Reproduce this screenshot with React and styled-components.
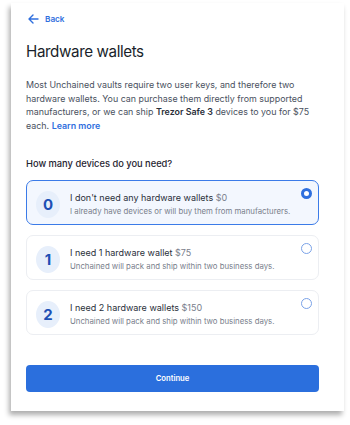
import React, { useState } from 'react'
import styled, { createGlobalStyle } from 'styled-components'

const GlobalStyle = createGlobalStyle`
    html, body {
        margin:0;
        padding:0;
        background:#ffffff;
        font-family:Inter, "Noto Sans", sans-serif;
    }
`;

const Page = styled.div`
    width:350px;
    height:425px;
    box-sizing:border-box;
    padding:3px 6px 0 11px;
    overflow:hidden;
`;

const Card = styled.section`
    background:#ffffff;
    box-shadow:-2px 4px 5px rgba(0,0,0,0.32);
    height:408px;
    box-sizing:border-box;
    padding:10px 25px 0 15px;
    display:flex;
    flex-direction:column;
`;

const BackLink = styled.a`
    display:flex;
    align-items:center;
    gap:6px;
    color:#2f6fde;
    font-size:8.2px;
    font-weight:600;
    text-decoration:none;
    height:12px;
    margin-left:2px;
`;

const Title = styled.h1`
    margin:16px 0 0;
    font-size:15.2px;
    font-weight:400;
    color:#1a1f2b;
    letter-spacing:-0.4px;
    line-height:22px;
`;

const Intro = styled.p`
    margin:15px 0 0;
    font-size:8.9px;
    line-height:13.6px;
    color:#4a5160;
    & strong{
        color:#2a2f3a;
        font-weight:600;
    }
    & a{
        color:#2f6fde;
        font-weight:600;
        text-decoration:none;
    }
`;

const Question = styled.h2`
    margin:25px 0 0;
    font-size:9.3px;
    font-weight:500;
    color:#1f2430;
    line-height:14px;
`;

const Options = styled.div`
    margin-top:9px;
    display:flex;
    flex-direction:column;
    gap:10px;
`;

const Option = styled.label`
    position:relative;
    display:flex;
    align-items:center;
    gap:10px;
    height:45px;
    box-sizing:border-box;
    padding:3px 8px 0 9px;
    border-radius:7px;
    cursor:pointer;
    border:${({ $active }) => $active ? '1.5px solid #3b7be8' : '1px solid #eceef2'};
    background:${({ $active }) => $active ? '#f3f7fe' : '#ffffff'};
`;

const Count = styled.span`
    flex:none;
    width:24px;
    height:27px;
    border-radius:50%;
    background:#e7effb;
    color:#1d4fb5;
    font-size:15px;
    font-weight:700;
    display:flex;
    align-items:center;
    justify-content:center;
`;

const OptionText = styled.div`
    display:flex;
    flex-direction:column;
    gap:2px;
`;

const OptionTitle = styled.div`
    font-size:9px;
    color:#2a2f3a;
    line-height:13px;
    & span{
        color:#7a808c;
    }
`;

const OptionSub = styled.div`
    font-size:7.8px;
    color:#7a808c;
    line-height:11px;
`;

const Radio = styled.span`
    position:absolute;
    top:7px;
    right:6px;
    width:11px;
    height:11px;
    box-sizing:border-box;
    border-radius:50%;
    border:${({ $active }) => $active ? '3px solid #2f6fde' : '1px solid #7aa2e8'};
    background:#ffffff;
`;

const Continue = styled.button`
    margin-top:30px;
    height:27px;
    border:none;
    border-radius:4px;
    background:#2b6fdd;
    color:#ffffff;
    font-family:inherit;
    font-size:7.7px;
    font-weight:600;
    cursor:pointer;
`;

const options = [
    { n: 0, title: "I don't need any hardware wallets", price: '$0', sub: 'I already have devices or will buy them from manufacturers.' },
    { n: 1, title: 'I need 1 hardware wallet', price: '$75', sub: 'Unchained will pack and ship within two business days.' },
    { n: 2, title: 'I need 2 hardware wallets', price: '$150', sub: 'Unchained will pack and ship within two business days.' },
];

export default function App() {
    const [selected, setSelected] = useState(0);
    return (
        <Page>
            <GlobalStyle />
            <Card>
                <BackLink href="#">
                    <svg width="11" height="10" viewBox="0 0 11 10" fill="none" stroke="#2f6fde" strokeWidth="1.4" strokeLinecap="round" strokeLinejoin="round">
                        <path d="M10 5H1.2M5 1L1 5l4 4" />
                    </svg>
                    Back
                </BackLink>
                <Title>Hardware wallets</Title>
                <Intro>
                    Most Unchained vaults require two user keys, and therefore two hardware wallets. You can purchase them directly from supported manufacturers, or we can ship <strong>Trezor Safe 3</strong> devices to you for $75 each. <a href="#">Learn more</a>
                </Intro>
                <Question>How many devices do you need?</Question>
                <Options>
                    {options.map(option =>
                        <Option key={option.n} $active={selected === option.n} onClick={() => setSelected(option.n)}>
                            <Count>{option.n}</Count>
                            <OptionText>
                                <OptionTitle>{option.title} <span>{option.price}</span></OptionTitle>
                                <OptionSub>{option.sub}</OptionSub>
                            </OptionText>
                            <Radio $active={selected === option.n} />
                        </Option>
                    )}
                </Options>
                <Continue>Continue</Continue>
            </Card>
        </Page>
    )
}
